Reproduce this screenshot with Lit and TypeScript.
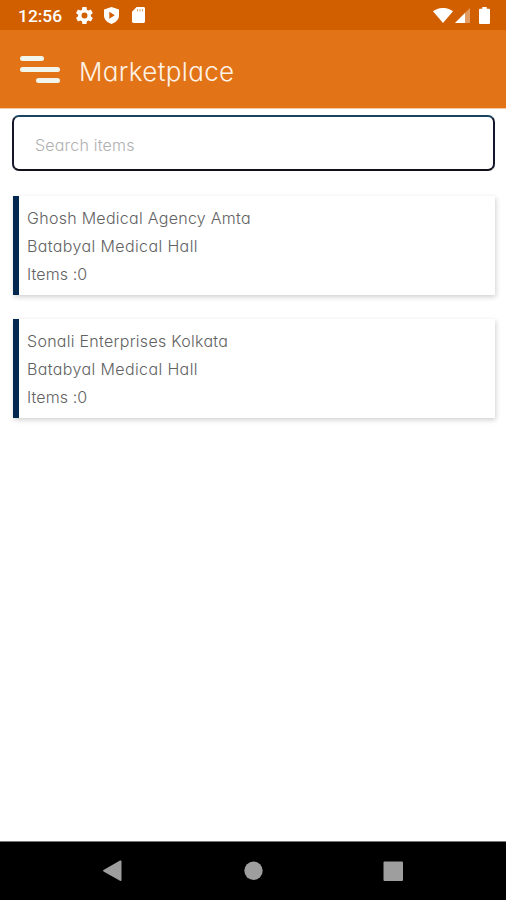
import { LitElement, html, css } from "lit";
import { customElement, property } from "lit/decorators.js";

@customElement("status-bar")
class StatusBar extends LitElement {
  static styles = css`
    :host { display: flex; height: 30px; background: #d15f00; align-items: center; color: #fff; }
    .time { margin-left: 18px; width: 58px; font: 500 17.400px/30px Roboto, sans-serif; height: 29px; white-space: nowrap; }
    svg { display: block; fill: #fff; flex: none; }
    .shield { margin-left: 11px; }
    .card { margin-left: 13px; }
    .gap { flex: 1; }
    .signal { margin-left: 2px; }
    .battery { margin: 0 16px 0 9px; }
  `;
  render() {
    return html`
      <span class="time">12:56</span>
      <svg width="17" height="17" viewBox="2 2 20 20"><path d="M19.4 13a7.500 7.500 0 0 0 0-2l2.100-1.600a.5.5 0 0 0 .1-.6l-2-3.500a.5.5 0 0 0-.6-.2l-2.500 1a7 7 0 0 0-1.700-1L14.400 2.400a.5.5 0 0 0-.5-.4h-4a.5.5 0 0 0-.5.4L9 5.100a7 7 0 0 0-1.700 1l-2.500-1a.5.5 0 0 0-.6.2l-2 3.500a.5.5 0 0 0 .1.600L4.500 11a7.500 7.500 0 0 0 0 2l-2.200 1.600a.5.5 0 0 0-.1.6l2 3.500c.1.200.4.300.6.200l2.500-1a7 7 0 0 0 1.700 1l.4 2.700c0 .2.200.4.500.4h4c.2 0 .5-.2.500-.4l.4-2.700a7 7 0 0 0 1.700-1l2.500 1c.2.100.5 0 .6-.2l2-3.500a.5.5 0 0 0-.1-.6zM12 15.500a3.500 3.500 0 1 1 0-7 3.500 3.500 0 0 1 0 7z"/></svg>
      <svg class="shield" width="15" height="17" viewBox="0 0 15 17"><path fill-rule="evenodd" d="M7.500 0 15 2.600V8.500c0 3.800-3 7-7.500 8.500C3 15.500 0 12.300 0 8.500V2.600zM5.300 4.700v7L10.800 8.200z"/></svg>
      <svg class="card" width="13" height="16" viewBox="0 0 13 16"><path fill-rule="evenodd" d="M4.600 0H11.600Q13 0 13 1.400V14.600Q13 16 11.600 16H1.400Q0 16 0 14.600V4.700z"/><path fill="#d9a36c" d="M5 2v2.500h1V2zM7.500 2v2.500h1V2zM10 2v2.500h1V2z"/></svg>
      <span class="gap"></span>
      <svg width="20" height="15" viewBox="0 0 20 15"><path d="M0 3.200C5.600-1.100 14.400-1.100 20 3.200L10 15z"/></svg>
      <svg class="signal" width="15" height="15" viewBox="0 0 15 15"><path opacity=".38" d="M15 0V15H0z"/><path d="M10 5V15H0z"/></svg>
      <svg class="battery" width="11" height="17" viewBox="0 0 11 17"><path d="M3.300 0H7.700V1.700H10Q11 1.700 11 2.700V16Q11 17 10 17H1Q0 17 0 16V2.700Q0 1.700 1 1.700H3.300z"/></svg>
    `;
  }
}

@customElement("supplier-card")
class SupplierCard extends LitElement {
  @property() name = "";
  @property() hall = "";
  @property({ type: Number }) items = 0;
  static styles = css`
    :host {
      display: block; box-sizing: border-box; height: 99px; padding: 8px 0 0 8px;
      border-left: 6px solid #03284f; background: #fff;
      box-shadow: 1px 2px 5px rgba(0, 0, 0, .19);
      font: 300 16px/28.200px Inter, sans-serif; font-feature-settings: "cv11";
      color: #626262;
    }
    .row { white-space: nowrap; }
    .name { letter-spacing: .28px; }
    .hall { letter-spacing: .38px; }
    .count { letter-spacing: .1px; }
  `;
  render() {
    return html`
      <div class="row name">${this.name}</div>
      <div class="row hall">${this.hall}</div>
      <div class="row count">Items :${this.items}</div>
    `;
  }
}

@customElement("app-root")
class AppRoot extends LitElement {
  static styles = css`
    :host { display: flex; flex-direction: column; height: 900px; background: #fff; overflow: hidden; }
    header { height: 79px; background: #e27417; border-bottom: 1px solid #f4c6a2; box-sizing: border-box; display: flex; align-items: center; flex: none; }
    .menu { margin: 2px 0 0 20px; fill: #f2f5ec; }
    h1 { margin: 6px 0 0 19px; font: 300 26px/32px Inter, sans-serif; letter-spacing: .35px; font-feature-settings: "cv11"; color: #fff2e6; }
    status-bar { flex: none; }
    main { flex: 1; padding: 6px 11px 0 12px; }
    input {
      display: block; box-sizing: border-box; width: 100%; height: 56px; margin: 0 0 25px; padding: 4px 20px 0 21px;
      border: 2px solid #15152b; border-top-color: #174461; border-bottom-color: #11111b; border-radius: 7px; outline: none;
      background: #fff; font: 300 16px Inter, sans-serif; letter-spacing: .2px; font-feature-settings: "cv11";
    }
    input::placeholder { color: #b0b0b0; opacity: 1; }
    supplier-card { margin-bottom: 24px; margin-left: 1px; }
    nav { height: 59px; box-sizing: border-box; background: #000; border-top: 1px solid #777; flex: none; }
    .keys { display: block; fill: #9e9e9e; }
  `;
  private suppliers = [
    { name: "Ghosh Medical Agency Amta", hall: "Batabyal Medical Hall", items: 0 },
    { name: "Sonali Enterprises Kolkata", hall: "Batabyal Medical Hall", items: 0 },
  ];
  render() {
    return html`
      <status-bar></status-bar>
      <header>
        <svg class="menu" width="40" height="28" viewBox="0 0 40 28">
          <rect y="0" width="24" height="5" rx="2.500"/><rect y="11" width="40" height="5" rx="2.500"/><rect x="16" y="22" width="24" height="5" rx="2.500"/>
        </svg>
        <h1>Marketplace</h1>
      </header>
      <main>
        <input placeholder="Search items" aria-label="Search items" />
        ${this.suppliers.map((s) => html`<supplier-card .name=${s.name} .hall=${s.hall} .items=${s.items}></supplier-card>`)}
      </main>
      <nav>
        <svg class="keys" width="506" height="58" viewBox="0 842 506 58">
          <path d="M103.500 870 120 860.500Q121.500 860 121.500 861.500V880Q121.500 881.500 120 880.700L103.500 871.500Q102.500 870.700 103.500 870z"/>
          <circle cx="253.500" cy="870.700" r="9.200"/><rect x="383.500" y="861.500" width="19.500" height="19.500" rx="1"/>
        </svg>
      </nav>
    `;
  }
}
